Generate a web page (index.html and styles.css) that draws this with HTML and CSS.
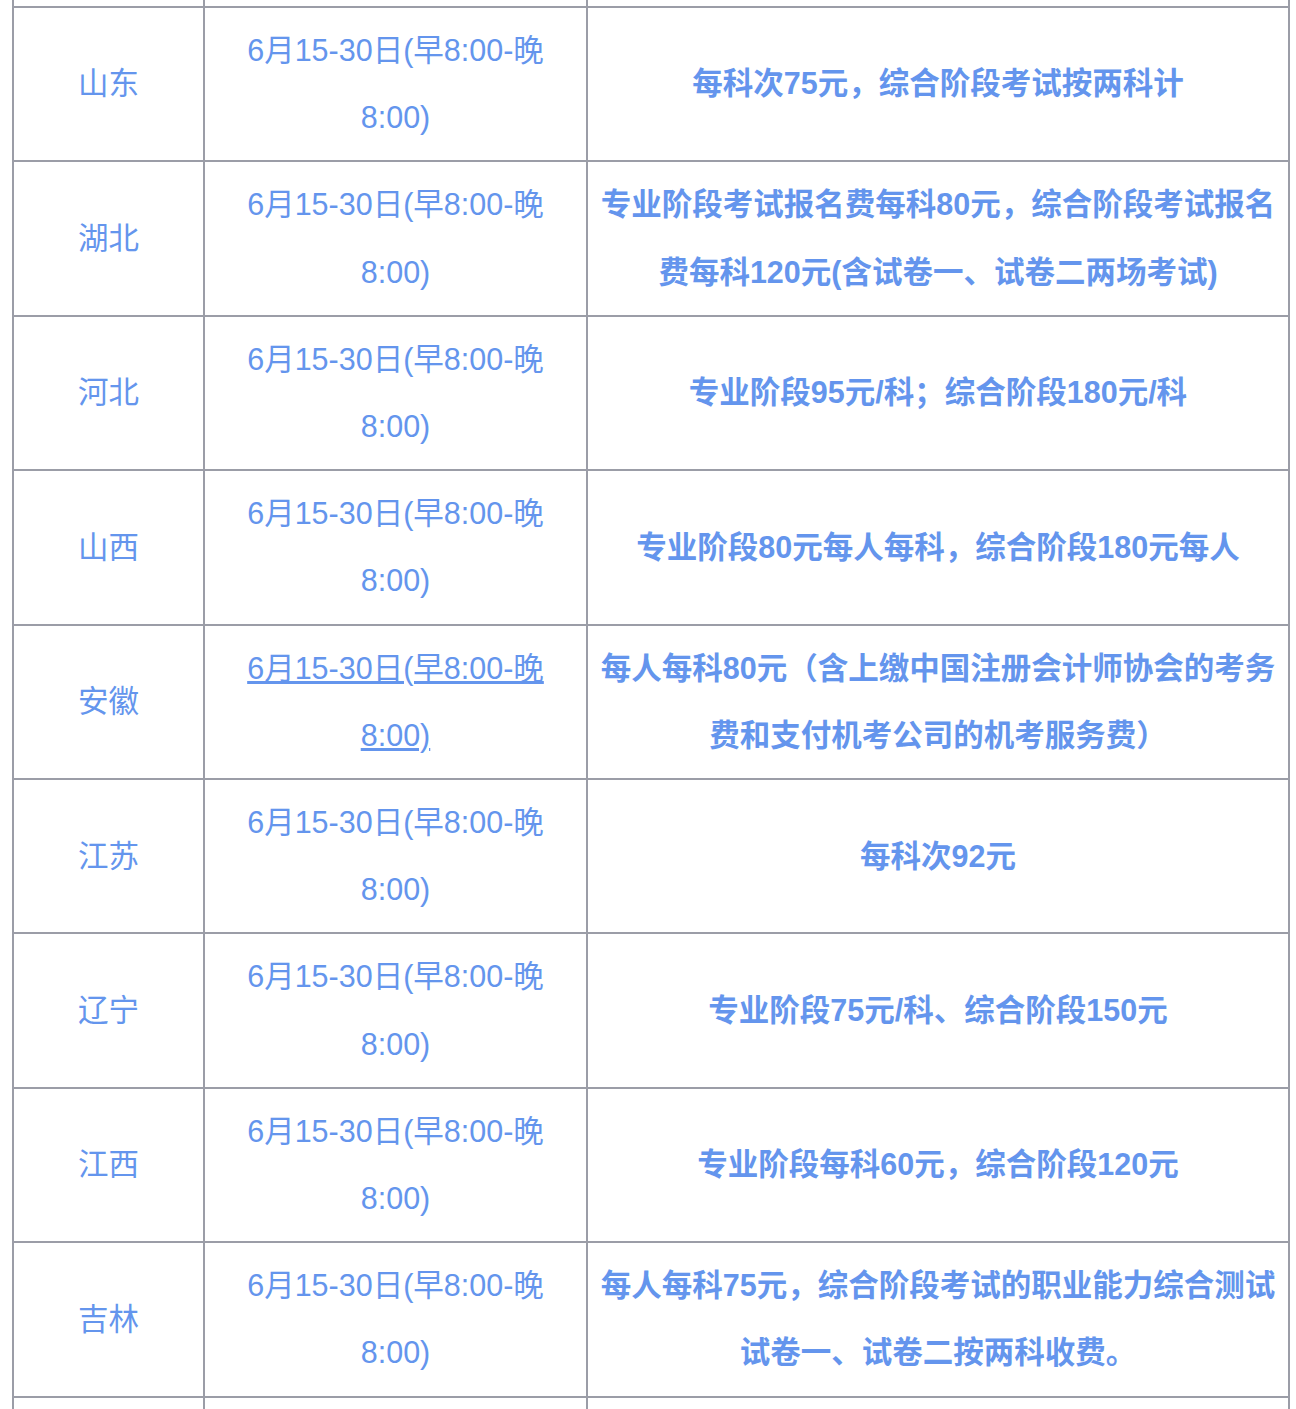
FILE: index.html
```html
<!DOCTYPE html>
<html lang="zh-CN">
<head>
<meta charset="utf-8">
<title>报名费</title>
<link rel="stylesheet" href="styles.css">
</head>
<body>
<div class="wrap">
<table class="fee">
<colgroup><col class="c1"><col class="c2"><col class="c3"></colgroup>
<tbody>
<tr class="cut"><td></td><td></td><td></td></tr>
<tr><td>山东</td><td>6月15-30日(早8:00-晚8:00)</td><td class="fee-t">每科次75元，综合阶段考试按两科计</td></tr>
<tr><td>湖北</td><td>6月15-30日(早8:00-晚8:00)</td><td class="fee-t">专业阶段考试报名费每科80元，综合阶段考试报名费每科120元(含试卷一、试卷二两场考试)</td></tr>
<tr><td>河北</td><td>6月15-30日(早8:00-晚8:00)</td><td class="fee-t">专业阶段95元/科；综合阶段180元/科</td></tr>
<tr><td>山西</td><td>6月15-30日(早8:00-晚8:00)</td><td class="fee-t">专业阶段80元每人每科，综合阶段180元每人</td></tr>
<tr><td>安徽</td><td><a class="lnk" href="#">6月15-30日(早8:00-晚8:00)</a></td><td class="fee-t">每人每科80元（含上缴中国注册会计师协会的考务费和支付机考公司的机考服务费）</td></tr>
<tr><td>江苏</td><td>6月15-30日(早8:00-晚8:00)</td><td class="fee-t">每科次92元</td></tr>
<tr><td>辽宁</td><td>6月15-30日(早8:00-晚8:00)</td><td class="fee-t">专业阶段75元/科、综合阶段150元</td></tr>
<tr><td>江西</td><td>6月15-30日(早8:00-晚8:00)</td><td class="fee-t">专业阶段每科60元，综合阶段120元</td></tr>
<tr><td>吉林</td><td>6月15-30日(早8:00-晚8:00)</td><td class="fee-t">每人每科75元，综合阶段考试的职业能力综合测试试卷一、试卷二按两科收费。</td></tr>
<tr class="cut"><td></td><td></td><td></td></tr>
</tbody>
</table>
</div>
</body>
</html>
```

FILE: styles.css
```css
html, body {
  margin: 0;
  padding: 0;
  background: #ffffff;
}
.wrap {
  padding-left: 12px;
  overflow: hidden;
  height: 1409px;
}
.fee {
  margin-top: -148.5px;
  border-collapse: collapse;
  table-layout: fixed;
  width: 1278px;
  font-family: "Liberation Sans", "Noto Sans CJK SC", sans-serif;
  font-size: 30.5px;
  line-height: 67.2px;
  color: #6495ed;
}
.c1 { width: 191px; }
.c2 { width: 383px; }
.c3 { width: 702px; }
.fee td {
  border: 2px solid #9b9da7;
  padding: 9px 10px;
  text-align: center;
  vertical-align: middle;
}
.fee .cut td {
  height: 134.4px;
}
.fee td.fee-t {
  font-weight: bold;
  padding: 9px 6px;
}
.lnk {
  color: #6495ed;
  text-decoration: underline;
}
```
